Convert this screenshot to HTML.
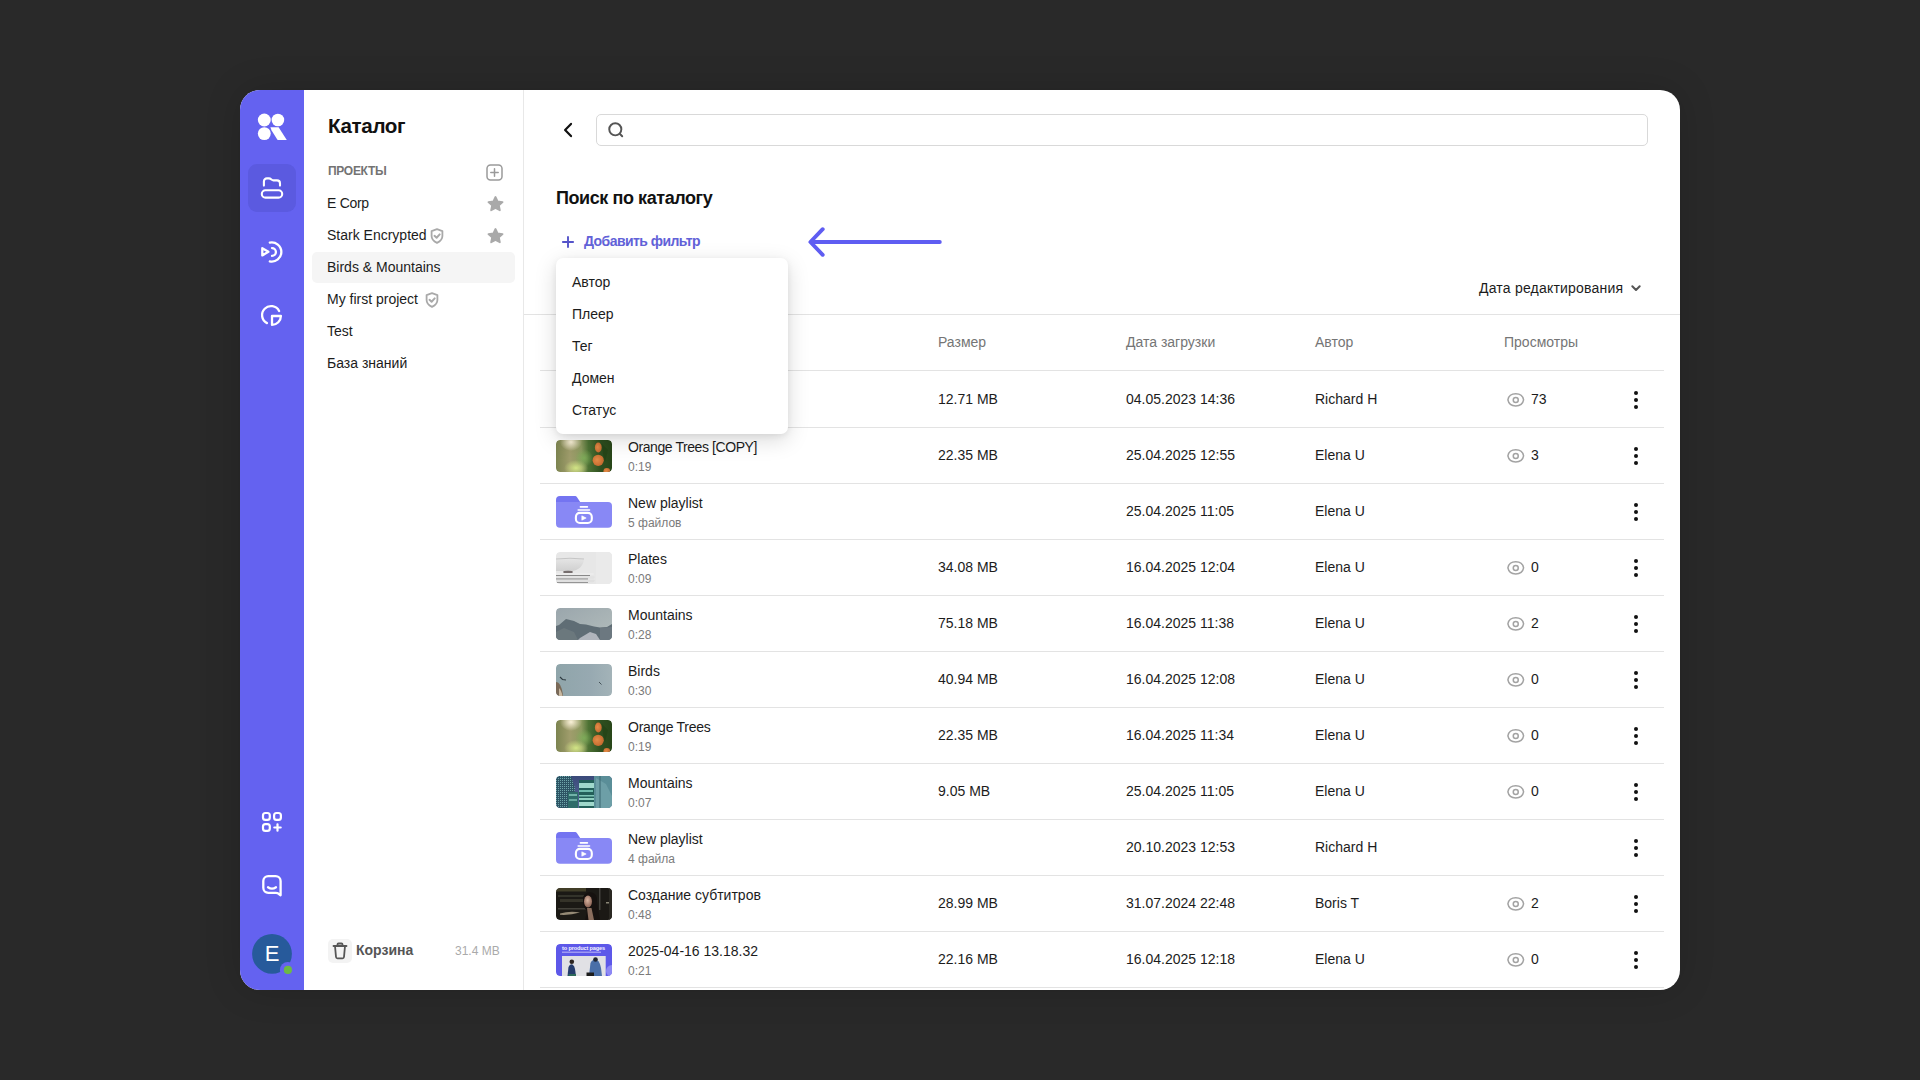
<!DOCTYPE html>
<html><head><meta charset="utf-8">
<style>
*{box-sizing:border-box;margin:0;padding:0}
html,body{width:1920px;height:1080px;overflow:hidden;background:#292929;font-family:"Liberation Sans",sans-serif;color:#1c1c1c}
.frame{position:absolute;left:240px;top:90px;width:1440px;height:900px;background:#fff;border-radius:20px;overflow:hidden;box-shadow:0 0 36px rgba(0,0,0,0.16)}
.rail{position:absolute;left:0;top:0;width:64px;height:900px;background:#6462f0}
.sideb{position:absolute;left:283px;top:0;width:1px;height:900px;background:#e8e8e8}
.a{position:absolute;white-space:nowrap}
.t14{font-size:14px;line-height:16px}
.navsel{position:absolute;left:248px;top:164px;width:48px;height:48px;border-radius:9px;background:#5b5ae0}
.proj{position:absolute;left:327px;font-size:14px;line-height:16px;color:#1c1c1c}
.selitem{position:absolute;left:312px;top:252px;width:203px;height:31px;border-radius:5px;background:#f5f5f5}
.hdr{position:absolute;font-size:14px;line-height:16px;color:#757575;top:334px}
.sep{position:absolute;left:540px;width:1124px;height:1px;background:#e3e3e3}
.thumb{position:absolute;left:556px;width:56px;height:32px;border-radius:4px;overflow:hidden;clip-path:inset(0 round 4px)}
.title{position:absolute;left:628px;font-size:14px;line-height:16px;color:#1c1c1c}
.sub{position:absolute;left:628px;font-size:12px;line-height:14px;color:#7a7a7a}
.cell{position:absolute;font-size:14px;line-height:16px;color:#1c1c1c}
.kebab{position:absolute;left:1632px;width:8px;height:20px}
.kebab i{position:absolute;left:2px;width:4px;height:4px;border-radius:50%;background:#111}
.eye{position:absolute;left:1506px;width:20px;height:14px}
.dd{position:absolute;left:556px;top:258px;width:232px;height:176px;background:#fff;border-radius:7px;box-shadow:0 6px 22px rgba(0,0,0,0.15),0 2px 6px rgba(0,0,0,0.07)}
.ddi{position:absolute;left:572px;font-size:14px;line-height:16px;color:#1c1c1c}
</style></head><body>
<div class="frame">
  <div class="rail"></div>
  <div class="sideb"></div>
</div>

<!-- rail icons -->
<svg class="a" style="left:240px;top:100px" width="64" height="64" viewBox="0 0 64 64">
  <circle cx="24.3" cy="20" r="6.45" fill="#fff"/>
  <circle cx="37.9" cy="20" r="6.3" fill="#fff"/>
  <circle cx="24.3" cy="33.6" r="6.45" fill="#fff"/>
  <path d="M30.4 27.2 L38.6 27.2 L46.8 40.1 L37.6 40.1 L31.6 30.5 Z" fill="#fff"/>
</svg>
<div class="navsel"></div>
<svg class="a" style="left:256px;top:172px" width="32" height="32" viewBox="0 0 32 32" fill="none" stroke="#fff" stroke-width="2.1" stroke-linecap="round" stroke-linejoin="round">
  <path d="M7.9 13.6 V9.4 a3 3 0 0 1 3-3 h2 c1.2 0 1.8 .5 2.5 1.1 c.6 .5 1.1 .9 2 .9 H21 a3 3 0 0 1 3 3 V13.6"/>
  <rect x="5.8" y="18.3" width="20.4" height="7.3" rx="3.65"/>
</svg>
<svg class="a" style="left:256px;top:236px" width="32" height="32" viewBox="0 0 32 32" fill="none" stroke="#fff" stroke-width="2.3" stroke-linecap="round" stroke-linejoin="round">
  <path d="M6.3 12.2 L12.4 15.8 L6.3 19.4 Z" stroke-width="2.3"/>
  <path d="M16 12.1 A3.9 3.9 0 0 1 16 19.9"/>
  <path d="M13.8 6.6 A9.6 9.6 0 1 1 13.8 25.4"/>
</svg>
<svg class="a" style="left:256px;top:300px" width="32" height="32" viewBox="0 0 32 32" fill="none" stroke="#fff" stroke-width="2.3" stroke-linecap="round" stroke-linejoin="round">
  <path d="M23.1 11 A9 9 0 1 0 11 23.1"/>
  <path d="M16 16 H24.9 A8.9 8.9 0 0 1 16 24.9 Z"/>
</svg>
<svg class="a" style="left:256px;top:806px" width="32" height="32" viewBox="0 0 32 32" fill="none" stroke="#fff" stroke-width="2.2" stroke-linecap="round" stroke-linejoin="round">
  <rect x="7" y="7" width="6.8" height="6.8" rx="2.4"/>
  <rect x="18.1" y="7" width="6.8" height="6.8" rx="2.4"/>
  <rect x="7" y="18.1" width="6.8" height="6.8" rx="2.4"/>
  <path d="M21.5 18.3 V24.7 M18.3 21.5 H24.7"/>
</svg>
<svg class="a" style="left:256px;top:870px" width="32" height="32" viewBox="0 0 32 32" fill="none" stroke="#fff" stroke-width="2.3" stroke-linecap="round" stroke-linejoin="round">
  <path d="M24.6 25.3 L21.9 23.3 c-.6-.4-1.2-.5-2-.5 H12.3 a5 5 0 0 1-5-5 V11.1 a5 5 0 0 1 5-5 h7.3 a5 5 0 0 1 5 5 Z"/>
  <path d="M12 17.3 q4 2.8 8 0"/>
</svg>
<svg class="a" style="left:244px;top:926px" width="60" height="60" viewBox="0 0 60 60">
  <defs><mask id="av"><rect width="60" height="60" fill="#fff"/><circle cx="43.9" cy="43.9" r="8" fill="#000"/></mask></defs>
  <circle cx="28" cy="27.8" r="19.9" fill="#275a9b" mask="url(#av)"/>
  <circle cx="43.9" cy="43.9" r="4.1" fill="#6cba46"/>
</svg>
<div class="a" style="left:252px;top:934px;width:40px;height:40px;color:#fff;font-size:22px;line-height:40px;text-align:center">E</div>

<!-- sidebar -->
<div class="a" style="left:328px;top:114px;font-size:20.6px;line-height:24px;font-weight:bold;letter-spacing:-0.35px;color:#111">Каталог</div>
<div class="a" style="left:328px;top:164px;font-size:12px;line-height:14px;font-weight:bold;letter-spacing:-0.3px;color:#737373">ПРОЕКТЫ</div>
<svg class="a" style="left:486px;top:164px" width="17" height="17" viewBox="0 0 17 17" fill="none" stroke="#9a9a9a" stroke-width="1.5" stroke-linecap="round">
  <rect x="1" y="1" width="15" height="15" rx="3.5"/>
  <path d="M8.5 4.8 V12.2 M4.8 8.5 H12.2"/>
</svg>
<div class="selitem"></div>
<div class="proj" style="top:195px;letter-spacing:-0.3px">E Corp</div>
<div class="proj" style="top:227px">Stark Encrypted</div>
<div class="proj" style="top:259px">Birds &amp; Mountains</div>
<div class="proj" style="top:291px">My first project</div>
<div class="proj" style="top:323px">Test</div>
<div class="proj" style="top:355px">База знаний</div>
<svg class="a" style="left:486px;top:195px" width="19" height="18" viewBox="0 0 24 24"><path fill="#a9a9a9" d="M12 2.6 l2.8 6 6.6 .8 -4.9 4.5 1.3 6.5 L12 17.2 6.2 20.4 7.5 13.9 2.6 9.4 9.2 8.6Z" stroke="#a9a9a9" stroke-width="2.4" stroke-linejoin="round"/></svg>
<svg class="a" style="left:486px;top:227px" width="19" height="18" viewBox="0 0 24 24"><path fill="#a9a9a9" d="M12 2.6 l2.8 6 6.6 .8 -4.9 4.5 1.3 6.5 L12 17.2 6.2 20.4 7.5 13.9 2.6 9.4 9.2 8.6Z" stroke="#a9a9a9" stroke-width="2.4" stroke-linejoin="round"/></svg>
<svg class="a" style="left:430px;top:228px" width="14" height="16" viewBox="0 0 14 16" fill="none" stroke="#a9a9a9" stroke-width="1.8" stroke-linecap="round" stroke-linejoin="round">
  <path d="M7 1.2 L12.4 3.1 V8 c0 3.2-2.5 5.5-5.4 6.9 c-2.9-1.4-5.4-3.7-5.4-6.9 V3.1 Z"/>
  <path d="M4.5 7.8 l2.1 1.9 l3.1-3.3" stroke-width="2"/>
</svg>
<svg class="a" style="left:425px;top:292px" width="14" height="16" viewBox="0 0 14 16" fill="none" stroke="#a9a9a9" stroke-width="1.8" stroke-linecap="round" stroke-linejoin="round">
  <path d="M7 1.2 L12.4 3.1 V8 c0 3.2-2.5 5.5-5.4 6.9 c-2.9-1.4-5.4-3.7-5.4-6.9 V3.1 Z"/>
  <path d="M4.5 7.8 l2.1 1.9 l3.1-3.3" stroke-width="2"/>
</svg>
<!-- trash -->
<div class="a" style="left:328px;top:939px;width:24px;height:24px;border-radius:5px;background:#f3f3f3"></div>
<svg class="a" style="left:332px;top:942px" width="16" height="18" viewBox="0 0 16 18" fill="none" stroke="#555" stroke-width="1.8" stroke-linecap="round" stroke-linejoin="round">
  <path d="M1.5 4 H14.5"/>
  <path d="M5.5 4 V2.5 a1 1 0 0 1 1-1 h3 a1 1 0 0 1 1 1 V4"/>
  <path d="M3 4 L4 15 a1.5 1.5 0 0 0 1.5 1.3 h5 a1.5 1.5 0 0 0 1.5-1.3 L13 4"/>
</svg>
<div class="a" style="left:356px;top:942px;font-size:14px;line-height:16px;font-weight:bold;color:#555">Корзина</div>
<div class="a" style="left:455px;top:944px;font-size:12px;line-height:14px;color:#aaa">31.4 MB</div>

<!-- main top -->
<svg class="a" style="left:560px;top:122px" width="16" height="16" viewBox="0 0 16 16" fill="none" stroke="#111" stroke-width="2.2" stroke-linecap="round" stroke-linejoin="round"><path d="M11 1.9 L5.1 8 L11 14.1"/></svg>
<div class="a" style="left:596px;top:114px;width:1052px;height:32px;border:1px solid #d9d9d9;border-radius:5px"></div>
<svg class="a" style="left:606px;top:120px" width="20" height="20" viewBox="0 0 20 20" fill="none" stroke="#555" stroke-width="1.95" stroke-linecap="round"><circle cx="9.3" cy="9.3" r="6.05"/><path d="M14 14 L16.2 16.2"/></svg>

<div class="a" style="left:556px;top:187px;font-size:18px;line-height:22px;font-weight:bold;letter-spacing:-0.42px;color:#111">Поиск по каталогу</div>
<svg class="a" style="left:560px;top:234px" width="16" height="16" viewBox="0 0 16 16" fill="none" stroke="#5453c9" stroke-width="1.9" stroke-linecap="round"><path d="M8 2.9 V13.1 M2.9 8 H13.1"/></svg>
<div class="a" style="left:584px;top:233px;font-size:14px;line-height:16px;font-weight:bold;letter-spacing:-0.55px;color:#6262d8">Добавить фильтр</div>
<svg class="a" style="left:800px;top:222px" width="150" height="40" viewBox="0 0 150 40" fill="none" stroke="#5f5df2" stroke-width="3.9" stroke-linecap="round" stroke-linejoin="round"><path d="M139.8 20 H11 M22.7 7.2 L10.4 20 L22.7 32.8"/></svg>

<div class="a" style="left:1479px;top:280px;font-size:14px;line-height:16px;letter-spacing:0.2px;color:#1c1c1c">Дата редактирования</div>
<svg class="a" style="left:1629px;top:282px" width="14" height="12" viewBox="0 0 14 12" fill="none" stroke="#555" stroke-width="2" stroke-linecap="round" stroke-linejoin="round"><path d="M3.3 4.3 L7 8 L10.7 4.3"/></svg>
<div class="a" style="left:524px;top:314px;width:1156px;height:1px;background:#e3e3e3"></div>

<div class="hdr" style="left:938px">Размер</div>
<div class="hdr" style="left:1126px">Дата загрузки</div>
<div class="hdr" style="left:1315px">Автор</div>
<div class="hdr" style="left:1504px">Просмотры</div>
<div class="sep" style="top:370px"></div>

<div class="cell" style="left:938px;top:391px">12.71 MB</div>
<div class="cell" style="left:1126px;top:391px">04.05.2023 14:36</div>
<div class="cell" style="left:1315px;top:391px">Richard H</div>
<svg class="a" style="left:1504px;top:390px" width="24" height="18" viewBox="0 0 24 18" fill="none" stroke="#a3a3a3" stroke-width="1.5"><path d="M3.9 9.9 C5.4 1.8 18.1 1.8 19.6 9.9 C18.1 18 5.4 18 3.9 9.9Z"/><circle cx="11.75" cy="9.9" r="2.5"/></svg>
<div class="cell" style="left:1531px;top:391px">73</div>
<div class="kebab" style="top:391px"><i style="top:0"></i><i style="top:7px"></i><i style="top:14px"></i></div>
<div class="sep" style="top:427px"></div>
<svg class="thumb" style="top:440px" width="56" height="32" viewBox="0 0 56 32"><defs><linearGradient id="og" x1="0" x2="1"><stop offset="0" stop-color="#7c8450"/><stop offset=".25" stop-color="#a09d6c"/><stop offset=".45" stop-color="#8d9a60"/><stop offset=".58" stop-color="#4d7234"/><stop offset=".8" stop-color="#2e4f20"/><stop offset="1" stop-color="#284619"/></linearGradient><radialGradient id="og2"><stop offset="0" stop-color="#fff6de" stop-opacity=".95"/><stop offset="1" stop-color="#fff6de" stop-opacity="0"/></radialGradient><radialGradient id="og3"><stop offset="0" stop-color="#d2e585"/><stop offset="1" stop-color="#d2e585" stop-opacity="0"/></radialGradient><radialGradient id="og4"><stop offset="0" stop-color="#7fae5a" stop-opacity=".9"/><stop offset="1" stop-color="#7fae5a" stop-opacity="0"/></radialGradient><radialGradient id="org" cx=".4" cy=".45" r=".6"><stop offset="0" stop-color="#e48d48"/><stop offset="1" stop-color="#c4692e"/></radialGradient></defs><rect width="56" height="32" fill="url(#og)"/><ellipse cx="15" cy="2" rx="11" ry="9" fill="url(#og2)"/><ellipse cx="20" cy="28" rx="12" ry="8" fill="url(#og3)"/><ellipse cx="28" cy="18" rx="9" ry="9" fill="url(#og4)"/><ellipse cx="42.3" cy="7.5" rx="3.4" ry="5" fill="url(#org)"/><circle cx="42.2" cy="20.3" r="5.6" fill="url(#org)"/><circle cx="50.8" cy="31.5" r="3.4" fill="url(#org)"/><path d="M46 4 L52 10 L49 22 L47 14Z" fill="#244417" opacity=".8"/></svg>
<div class="title" style="top:439px"><span style="letter-spacing:-0.42px">Orange Trees [COPY]</span></div>
<div class="sub" style="top:460px">0:19</div>
<div class="cell" style="left:938px;top:447px">22.35 MB</div>
<div class="cell" style="left:1126px;top:447px">25.04.2025 12:55</div>
<div class="cell" style="left:1315px;top:447px">Elena U</div>
<svg class="a" style="left:1504px;top:446px" width="24" height="18" viewBox="0 0 24 18" fill="none" stroke="#a3a3a3" stroke-width="1.5"><path d="M3.9 9.9 C5.4 1.8 18.1 1.8 19.6 9.9 C18.1 18 5.4 18 3.9 9.9Z"/><circle cx="11.75" cy="9.9" r="2.5"/></svg>
<div class="cell" style="left:1531px;top:447px">3</div>
<div class="kebab" style="top:447px"><i style="top:0"></i><i style="top:7px"></i><i style="top:14px"></i></div>
<div class="sep" style="top:483px"></div>
<svg class="a" style="left:556px;top:494px" width="56" height="34" viewBox="0 0 56 34"><path d="M0 6.1 a4 4 0 0 1 4-4 H18.5 c1.2 0 2 .5 2.7 1.4 L24.5 8.5 H0 Z" fill="#7474f1"/><path d="M0 8 H52 a4 4 0 0 1 4 4 V29.8 a4 4 0 0 1-4 4 H4 a4 4 0 0 1-4-4 Z" fill="#8888f5"/><g fill="none" stroke="#fff" stroke-linecap="round"><rect x="19.9" y="18.9" width="15.9" height="10.1" rx="4" stroke-width="2.1"/><path d="M22.2 16 H33.5 M24.4 12.9 H31.4" stroke-width="1.6"/></g><path d="M25.8 21.8 L30.2 24 L25.8 26.2Z" fill="#fff" stroke="#fff" stroke-width=".6" stroke-linejoin="round"/></svg>
<div class="title" style="top:495px">New playlist</div>
<div class="sub" style="top:516px">5 файлов</div>
<div class="cell" style="left:1126px;top:503px">25.04.2025 11:05</div>
<div class="cell" style="left:1315px;top:503px">Elena U</div>
<div class="kebab" style="top:503px"><i style="top:0"></i><i style="top:7px"></i><i style="top:14px"></i></div>
<div class="sep" style="top:539px"></div>
<svg class="thumb" style="top:552px" width="56" height="32" viewBox="0 0 56 32"><defs><linearGradient id="pb" x1="0" y1="0" x2="0" y2="1"><stop offset="0" stop-color="#e4e4e4"/><stop offset="1" stop-color="#d0d0d0"/></linearGradient></defs><rect width="56" height="32" fill="#e7e7e7"/><rect x="40" width="16" height="32" fill="#eaeaea"/><path d="M0 7.5 Q14 6.5 28 7.5 C27 14 23 18.5 15 19 H0Z" fill="url(#pb)"/><path d="M0 7 Q14 5.5 28 7" stroke="#bdbdbd" stroke-width=".8" fill="none"/><ellipse cx="12" cy="20" rx="5" ry="1.2" fill="#5a5050" opacity=".8"/><path d="M0 21 H36 Q40 21.5 37 23 H0Z" fill="#ececec"/><path d="M0 23.5 H34" stroke="#4a4a4a" stroke-width="1" opacity=".6"/><path d="M0 24.3 H38 Q40 25.5 37 26.7 H0Z" fill="#e2e2e2"/><path d="M0 27 H32" stroke="#404040" stroke-width="1" opacity=".6"/><path d="M0 27.8 H38 Q40 29 37 30.2 H0Z" fill="#e0e0e0"/><path d="M0 30.5 H32" stroke="#606060" stroke-width="1" opacity=".6"/></svg>
<div class="title" style="top:551px">Plates</div>
<div class="sub" style="top:572px">0:09</div>
<div class="cell" style="left:938px;top:559px">34.08 MB</div>
<div class="cell" style="left:1126px;top:559px">16.04.2025 12:04</div>
<div class="cell" style="left:1315px;top:559px">Elena U</div>
<svg class="a" style="left:1504px;top:558px" width="24" height="18" viewBox="0 0 24 18" fill="none" stroke="#a3a3a3" stroke-width="1.5"><path d="M3.9 9.9 C5.4 1.8 18.1 1.8 19.6 9.9 C18.1 18 5.4 18 3.9 9.9Z"/><circle cx="11.75" cy="9.9" r="2.5"/></svg>
<div class="cell" style="left:1531px;top:559px">0</div>
<div class="kebab" style="top:559px"><i style="top:0"></i><i style="top:7px"></i><i style="top:14px"></i></div>
<div class="sep" style="top:595px"></div>
<svg class="thumb" style="top:608px" width="56" height="32" viewBox="0 0 56 32"><defs><linearGradient id="ms" x1="0" y1="0" x2="1" y2="1"><stop offset="0" stop-color="#9aa6ac"/><stop offset="1" stop-color="#b3bdbc"/></linearGradient></defs><rect width="56" height="32" fill="url(#ms)"/><path d="M0 18 L3 17 L10 11 L18 13 L24 16 L30 16.5 L38 18.5 L44 19.5 L51 19 L56 16 V32 H0Z" fill="#5f6d75"/><path d="M0 24 L8 20 L18 24 L22 32 H0Z" fill="#6e7a80" opacity=".8"/><path d="M24 30 L34 24 L40 26 L44 32 H22Z" fill="#b9bcc4" opacity=".9"/><path d="M44 20 L56 19 V32 H44Z" fill="#6f7a83" opacity=".8"/></svg>
<div class="title" style="top:607px">Mountains</div>
<div class="sub" style="top:628px">0:28</div>
<div class="cell" style="left:938px;top:615px">75.18 MB</div>
<div class="cell" style="left:1126px;top:615px">16.04.2025 11:38</div>
<div class="cell" style="left:1315px;top:615px">Elena U</div>
<svg class="a" style="left:1504px;top:614px" width="24" height="18" viewBox="0 0 24 18" fill="none" stroke="#a3a3a3" stroke-width="1.5"><path d="M3.9 9.9 C5.4 1.8 18.1 1.8 19.6 9.9 C18.1 18 5.4 18 3.9 9.9Z"/><circle cx="11.75" cy="9.9" r="2.5"/></svg>
<div class="cell" style="left:1531px;top:615px">2</div>
<div class="kebab" style="top:615px"><i style="top:0"></i><i style="top:7px"></i><i style="top:14px"></i></div>
<div class="sep" style="top:651px"></div>
<svg class="thumb" style="top:664px" width="56" height="32" viewBox="0 0 56 32"><defs><linearGradient id="bs" x1="0" x2="1"><stop offset="0" stop-color="#8fa5aa"/><stop offset=".6" stop-color="#97a9b1"/><stop offset="1" stop-color="#a3b3b8"/></linearGradient></defs><rect width="56" height="32" fill="url(#bs)"/><path d="M0 18 C3 18 6 22 7 32 H0Z" fill="#7a6a58"/><path d="M3 24 C5 26 6 29 6.5 32 H3Z" fill="#c8b8a0"/><path d="M4 13 L6.5 15.5 L10 16" stroke="#2e3a40" stroke-width="1.1" fill="none"/><path d="M43 18 L45.5 20.5" stroke="#3a464c" stroke-width=".9"/></svg>
<div class="title" style="top:663px">Birds</div>
<div class="sub" style="top:684px">0:30</div>
<div class="cell" style="left:938px;top:671px">40.94 MB</div>
<div class="cell" style="left:1126px;top:671px">16.04.2025 12:08</div>
<div class="cell" style="left:1315px;top:671px">Elena U</div>
<svg class="a" style="left:1504px;top:670px" width="24" height="18" viewBox="0 0 24 18" fill="none" stroke="#a3a3a3" stroke-width="1.5"><path d="M3.9 9.9 C5.4 1.8 18.1 1.8 19.6 9.9 C18.1 18 5.4 18 3.9 9.9Z"/><circle cx="11.75" cy="9.9" r="2.5"/></svg>
<div class="cell" style="left:1531px;top:671px">0</div>
<div class="kebab" style="top:671px"><i style="top:0"></i><i style="top:7px"></i><i style="top:14px"></i></div>
<div class="sep" style="top:707px"></div>
<svg class="thumb" style="top:720px" width="56" height="32" viewBox="0 0 56 32"><defs><linearGradient id="og" x1="0" x2="1"><stop offset="0" stop-color="#7c8450"/><stop offset=".25" stop-color="#a09d6c"/><stop offset=".45" stop-color="#8d9a60"/><stop offset=".58" stop-color="#4d7234"/><stop offset=".8" stop-color="#2e4f20"/><stop offset="1" stop-color="#284619"/></linearGradient><radialGradient id="og2"><stop offset="0" stop-color="#fff6de" stop-opacity=".95"/><stop offset="1" stop-color="#fff6de" stop-opacity="0"/></radialGradient><radialGradient id="og3"><stop offset="0" stop-color="#d2e585"/><stop offset="1" stop-color="#d2e585" stop-opacity="0"/></radialGradient><radialGradient id="og4"><stop offset="0" stop-color="#7fae5a" stop-opacity=".9"/><stop offset="1" stop-color="#7fae5a" stop-opacity="0"/></radialGradient><radialGradient id="org" cx=".4" cy=".45" r=".6"><stop offset="0" stop-color="#e48d48"/><stop offset="1" stop-color="#c4692e"/></radialGradient></defs><rect width="56" height="32" fill="url(#og)"/><ellipse cx="15" cy="2" rx="11" ry="9" fill="url(#og2)"/><ellipse cx="20" cy="28" rx="12" ry="8" fill="url(#og3)"/><ellipse cx="28" cy="18" rx="9" ry="9" fill="url(#og4)"/><ellipse cx="42.3" cy="7.5" rx="3.4" ry="5" fill="url(#org)"/><circle cx="42.2" cy="20.3" r="5.6" fill="url(#org)"/><circle cx="50.8" cy="31.5" r="3.4" fill="url(#org)"/><path d="M46 4 L52 10 L49 22 L47 14Z" fill="#244417" opacity=".8"/></svg>
<div class="title" style="top:719px"><span style="letter-spacing:-0.25px">Orange Trees</span></div>
<div class="sub" style="top:740px">0:19</div>
<div class="cell" style="left:938px;top:727px">22.35 MB</div>
<div class="cell" style="left:1126px;top:727px">16.04.2025 11:34</div>
<div class="cell" style="left:1315px;top:727px">Elena U</div>
<svg class="a" style="left:1504px;top:726px" width="24" height="18" viewBox="0 0 24 18" fill="none" stroke="#a3a3a3" stroke-width="1.5"><path d="M3.9 9.9 C5.4 1.8 18.1 1.8 19.6 9.9 C18.1 18 5.4 18 3.9 9.9Z"/><circle cx="11.75" cy="9.9" r="2.5"/></svg>
<div class="cell" style="left:1531px;top:727px">0</div>
<div class="kebab" style="top:727px"><i style="top:0"></i><i style="top:7px"></i><i style="top:14px"></i></div>
<div class="sep" style="top:763px"></div>
<svg class="thumb" style="top:776px" width="56" height="32" viewBox="0 0 56 32"><defs><pattern id="cg" width="2" height="2" patternUnits="userSpaceOnUse"><rect width="2" height="2" fill="#2d5464"/><rect width="1" height="1" fill="#6fa6aa"/></pattern><linearGradient id="csky" x1="0" y1="0" x2="0" y2="1"><stop offset="0" stop-color="#3a4a7a"/><stop offset="1" stop-color="#5a6a9a"/></linearGradient></defs><rect width="56" height="32" fill="url(#csky)"/><path d="M0 0 H15 L19 12 L17 32 H0Z" fill="url(#cg)"/><rect x="12" y="16" width="10" height="16" fill="#2f6c6a"/><rect x="13" y="18" width="8" height="2" fill="#8fd0c4" opacity=".7"/><rect x="13" y="23" width="8" height="2" fill="#8fd0c4" opacity=".6"/><rect x="23" y="4" width="16" height="28" fill="#23605a"/><rect x="23" y="7" width="15" height="5" fill="#9fd8cc"/><rect x="23" y="14" width="14" height="2" fill="#6fbcae"/><rect x="23" y="19" width="15" height="1.5" fill="#7ec5b6"/><rect x="23" y="22" width="15" height="2" fill="#8fd0c0"/><rect x="23" y="26" width="15" height="4" fill="#9fd8cb"/><path d="M38 0 H56 V32 H38Z" fill="#5a8e98"/><path d="M40 2 L50 8 L56 20 V32 H40Z" fill="#7aaab0" opacity=".6"/><path d="M44 0 V32" stroke="#3a6670" stroke-width="1"/></svg>
<div class="title" style="top:775px">Mountains</div>
<div class="sub" style="top:796px">0:07</div>
<div class="cell" style="left:938px;top:783px">9.05 MB</div>
<div class="cell" style="left:1126px;top:783px">25.04.2025 11:05</div>
<div class="cell" style="left:1315px;top:783px">Elena U</div>
<svg class="a" style="left:1504px;top:782px" width="24" height="18" viewBox="0 0 24 18" fill="none" stroke="#a3a3a3" stroke-width="1.5"><path d="M3.9 9.9 C5.4 1.8 18.1 1.8 19.6 9.9 C18.1 18 5.4 18 3.9 9.9Z"/><circle cx="11.75" cy="9.9" r="2.5"/></svg>
<div class="cell" style="left:1531px;top:783px">0</div>
<div class="kebab" style="top:783px"><i style="top:0"></i><i style="top:7px"></i><i style="top:14px"></i></div>
<div class="sep" style="top:819px"></div>
<svg class="a" style="left:556px;top:830px" width="56" height="34" viewBox="0 0 56 34"><path d="M0 6.1 a4 4 0 0 1 4-4 H18.5 c1.2 0 2 .5 2.7 1.4 L24.5 8.5 H0 Z" fill="#7474f1"/><path d="M0 8 H52 a4 4 0 0 1 4 4 V29.8 a4 4 0 0 1-4 4 H4 a4 4 0 0 1-4-4 Z" fill="#8888f5"/><g fill="none" stroke="#fff" stroke-linecap="round"><rect x="19.9" y="18.9" width="15.9" height="10.1" rx="4" stroke-width="2.1"/><path d="M22.2 16 H33.5 M24.4 12.9 H31.4" stroke-width="1.6"/></g><path d="M25.8 21.8 L30.2 24 L25.8 26.2Z" fill="#fff" stroke="#fff" stroke-width=".6" stroke-linejoin="round"/></svg>
<div class="title" style="top:831px">New playlist</div>
<div class="sub" style="top:852px">4 файла</div>
<div class="cell" style="left:1126px;top:839px">20.10.2023 12:53</div>
<div class="cell" style="left:1315px;top:839px">Richard H</div>
<div class="kebab" style="top:839px"><i style="top:0"></i><i style="top:7px"></i><i style="top:14px"></i></div>
<div class="sep" style="top:875px"></div>
<svg class="thumb" style="top:888px" width="56" height="32" viewBox="0 0 56 32"><defs><radialGradient id="wf" cx=".45" cy=".4" r=".6"><stop offset="0" stop-color="#d9b4a0"/><stop offset="1" stop-color="#8a6254"/></radialGradient></defs><rect width="56" height="32" fill="#1b1915"/><rect width="30" height="3.5" fill="#46422a" opacity=".9"/><rect x="2" y="7" width="26" height="2" fill="#3a3a30" opacity=".8"/><rect x="4" y="11" width="24" height="3" fill="#403e32" opacity=".7"/><path d="M2 20 H30 V21.5 H2Z" fill="#4e4b44" opacity=".8"/><path d="M4 25.5 Q14 22.5 24 24.5 Q14 27.5 4 26.8Z" fill="#958a76"/><path d="M27 9 Q30 3 36 4.5 Q42 6 41 14 L44 32 H29 L31 23 Q27 19 27 14Z" fill="#16110f"/><ellipse cx="32" cy="13.5" rx="4" ry="6" fill="url(#wf)"/><path d="M31 20 L35.5 20 L38 32 H32.5Z" fill="#a88470" opacity=".8"/><rect x="43" y="0" width="1.5" height="22" fill="#4a4842" opacity=".9"/><rect x="50" y="14" width="6" height="1.5" fill="#8a8676"/><rect x="53" y="0" width="3" height="32" fill="#2a2822"/></svg>
<div class="title" style="top:887px">Создание субтитров</div>
<div class="sub" style="top:908px">0:48</div>
<div class="cell" style="left:938px;top:895px">28.99 MB</div>
<div class="cell" style="left:1126px;top:895px">31.07.2024 22:48</div>
<div class="cell" style="left:1315px;top:895px">Boris T</div>
<svg class="a" style="left:1504px;top:894px" width="24" height="18" viewBox="0 0 24 18" fill="none" stroke="#a3a3a3" stroke-width="1.5"><path d="M3.9 9.9 C5.4 1.8 18.1 1.8 19.6 9.9 C18.1 18 5.4 18 3.9 9.9Z"/><circle cx="11.75" cy="9.9" r="2.5"/></svg>
<div class="cell" style="left:1531px;top:895px">2</div>
<div class="kebab" style="top:895px"><i style="top:0"></i><i style="top:7px"></i><i style="top:14px"></i></div>
<div class="sep" style="top:931px"></div>
<svg class="thumb" style="top:944px" width="56" height="32" viewBox="0 0 56 32"><rect width="56" height="32" fill="#5d58e9"/><text x="6" y="5.6" font-family="Liberation Sans" font-weight="bold" font-size="5.6" fill="#f4f3ff" letter-spacing="-0.15">to product pages</text><rect x="6" y="7.6" width="39" height="1.2" fill="#aeaaf5"/><rect x="6" y="12" width="43.7" height="20" fill="#e1e1e5"/><circle cx="56" cy="27" r="6" fill="#8d88f4"/><path d="M11.5 32 L12.5 23 Q14 19.5 16.5 20.5 Q18.5 21.5 19 25 L20 32Z" fill="#253c6c"/><circle cx="15.8" cy="17.8" r="2.3" fill="#2c2420"/><path d="M12.5 30 H20 V32 H12.5Z" fill="#2e6a5a"/><path d="M33 32 L34.5 19 Q37 14 41 16 Q44 18 45 24 L46 32Z" fill="#4a6fa8"/><path d="M30.5 28.5 H38 V32 H30.5Z" fill="#1c1c1c"/><circle cx="39.5" cy="15.5" r="2.3" fill="#1f2430"/></svg>
<div class="title" style="top:943px">2025-04-16 13.18.32</div>
<div class="sub" style="top:964px">0:21</div>
<div class="cell" style="left:938px;top:951px">22.16 MB</div>
<div class="cell" style="left:1126px;top:951px">16.04.2025 12:18</div>
<div class="cell" style="left:1315px;top:951px">Elena U</div>
<svg class="a" style="left:1504px;top:950px" width="24" height="18" viewBox="0 0 24 18" fill="none" stroke="#a3a3a3" stroke-width="1.5"><path d="M3.9 9.9 C5.4 1.8 18.1 1.8 19.6 9.9 C18.1 18 5.4 18 3.9 9.9Z"/><circle cx="11.75" cy="9.9" r="2.5"/></svg>
<div class="cell" style="left:1531px;top:951px">0</div>
<div class="kebab" style="top:951px"><i style="top:0"></i><i style="top:7px"></i><i style="top:14px"></i></div>
<div class="sep" style="top:987px"></div>

<div class="dd"></div>
<div class="ddi" style="top:274px">Автор</div>
<div class="ddi" style="top:306px">Плеер</div>
<div class="ddi" style="top:338px">Тег</div>
<div class="ddi" style="top:370px">Домен</div>
<div class="ddi" style="top:402px">Статус</div>
</body></html>
